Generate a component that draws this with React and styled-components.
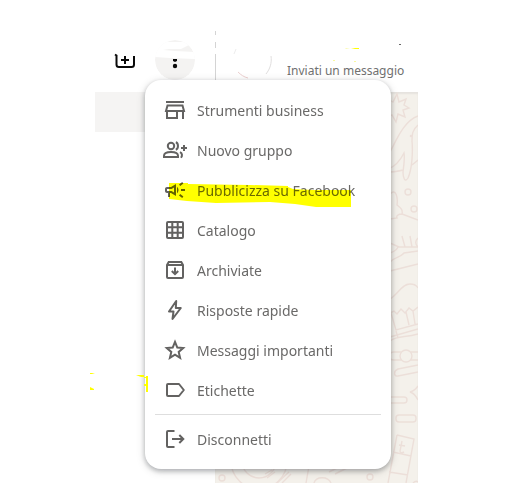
import React from 'react';
import styled, { createGlobalStyle, css } from 'styled-components';

const GlobalStyle = createGlobalStyle`
  * {
    box-sizing: border-box;
  }

  body {
    background-color: #fff;
    font-family: 'Noto Sans', 'Open Sans', sans-serif;
    margin: 0;
  }
`;

const Page = styled.div`
  display: grid;
  grid-template-columns: 120px 1fr;
  min-height: 100vh;
  overflow: hidden;
  padding: 0 109px 0 95px;
  position: relative;
`;

const Sidebar = styled.aside`
  display: flex;
  flex-direction: column;
  position: relative;
  z-index: 2;
`;

const SidebarHeader = styled.header`
  align-items: center;
  display: flex;
  height: 92px;
  justify-content: space-between;
  padding: 40px 20px 12px 18px;
`;

const IconButton = styled.button`
  background: none;
  border: 0;
  color: #0a0a0a;
  display: flex;
  padding: 0;
  ${({ $isRound }) =>
    $isRound &&
    css`
      border-radius: 50%;
      overflow: hidden;
    `}
`;

const SelectedChat = styled.div`
  background-color: #f5f4f3;
  height: 40px;
`;

const MenuAnchor = styled.div`
  position: relative;
`;

const Menu = styled.div`
  background-color: #fff;
  border-radius: 16px;
  box-shadow: 0 2px 5px rgba(11, 20, 26, 0.26), 0 2px 10px rgba(11, 20, 26, 0.16);
  left: -10px;
  padding: 10px 0;
  position: absolute;
  top: 40px;
  width: 246px;
`;

const MenuItem = styled.button`
  align-items: center;
  background: none;
  border: 0;
  color: #636261;
  display: flex;
  font-family: inherit;
  font-size: 14px;
  gap: 10px;
  height: 40px;
  line-height: 20px;
  padding: 0 18px;
  position: relative;
  text-align: left;
  white-space: nowrap;
  width: 100%;
`;

const MenuLabel = styled.span`
  color: #6a6968;
  padding-top: 2px;
`;

const MenuDivider = styled.hr`
  border: 0;
  border-top: 1px solid #dedede;
  margin: 4px 10px;
`;

const Marker = styled.svg`
  left: 24px;
  mix-blend-mode: multiply;
  position: absolute;
  top: 12px;
`;

const Chat = styled.main`
  display: flex;
  flex-direction: column;
  min-width: 0;
`;

const ChatHeader = styled.header`
  align-items: flex-end;
  display: flex;
  gap: 15px;
  height: 92px;
  padding: 0 0 12px 16px;
  position: relative;
`;

const HeaderEdge = styled.svg`
  left: 0;
  position: absolute;
  top: 30px;
`;

const ChatStatus = styled.p`
  color: #707070;
  flex: 1;
  font-size: 12px;
  line-height: 18px;
  margin: 0;
  white-space: nowrap;
`;

const Wallpaper = styled.div`
  background-color: #f4f1eb;
  box-shadow: inset 0 2px 2px rgba(11, 20, 26, 0.06);
  flex: 1;
  overflow: hidden;
`;

const Doodles = styled.svg`
  display: block;
`;

const Scraps = styled.svg`
  left: 0;
  pointer-events: none;
  position: absolute;
  top: 0;
  z-index: 3;
`;

const Icon = ({ children }) => (
  <svg
    width="24"
    height="24"
    viewBox="0 0 24 24"
    fill="none"
    stroke="currentColor"
    strokeWidth="2"
    aria-hidden="true"
  >
    {children}
  </svg>
);

const icons = {
  store: <path d="M3 4h18M4.5 7.5h15L21 13H3zM4 13v7h10v-7M20 13v8" />,
  group: (
    <g strokeWidth="2">
      <circle cx="8" cy="8" r="3.2" />
      <path d="M1 19v-1.2C1 15 5 14 8 14s7 1 7 3.8V19zM12.8 4.3c2.9.8 2.9 6.6 0 7.4M17 14.2c2.4 1.2 2.5 3.4 1 5.6" />
      <path d="M21 7v6M18 10h6" />
    </g>
  ),
  campaign: (
    <path
      fill="currentColor"
      stroke="none"
      d="M18 11v2h4v-2h-4zM16 17.6l3.2 2.4 1.2-1.6-3.2-2.4-1.2 1.6zM20.4 5.6 19.2 4 16 6.4 17.2 8l3.2-2.4zM4 9c-1.1 0-2 .9-2 2v2c0 1.1.9 2 2 2h1v4h2v-4h1l5 3V6L8 9H4zm5 1.7 2-1.2v5l-2-1.2-.5-.3H4v-2h4.5l.5-.3zM15.5 12c0-1.3-.6-2.5-1.5-3.3v6.6c.9-.8 1.5-2 1.5-3.3z"
    />
  ),
  grid: (
    <>
      <rect x="4" y="4" width="16" height="16" rx="1" />
      <path d="M9.3 4v16M14.7 4v16M4 9.3h16M4 14.7h16" />
    </>
  ),
  archive: (
    <>
      <path d="M4 7l1.7-3h12.6L20 7v12a1 1 0 0 1-1 1H5a1 1 0 0 1-1-1zM4 7h16" />
      <path d="M12 9.5v6.3M8.8 13l3.2 3.2 3.2-3.2" />
    </>
  ),
  bolt: <path strokeLinejoin="round" d="M13.2 3 6 13.5h4.5L9.5 21l8.3-11h-5z" />,
  star: (
    <path
      d="M12 3.800l2.300 5.700 5.900.500-4.500 3.900 1.400 6L12 16.700l-5.100 3.200 1.400-6-4.500-3.900 5.900-.500z"
    />
  ),
  label: <path strokeLinejoin="round" d="M5 6h11l4.800 6-4.800 6H5a1 1 0 0 1-1-1V7a1 1 0 0 1 1-1z" />,
  logout: <path d="M11.500 4H5a1 1 0 0 0-1 1v14a1 1 0 0 0 1 1h6.500M9 12h11M16.300 8l4 4-4 4" />,
};

const menuItems = [
  { icon: 'store', label: 'Strumenti business' },
  { icon: 'group', label: 'Nuovo gruppo' },
  { icon: 'campaign', label: 'Pubblicizza su Facebook', isMarked: true },
  { icon: 'grid', label: 'Catalogo' },
  { icon: 'archive', label: 'Archiviate' },
  { icon: 'bolt', label: 'Risposte rapide' },
  { icon: 'star', label: 'Messaggi importanti' },
  { icon: 'label', label: 'Etichette' },
];

const MainMenu = () => (
  <Menu role="menu">
    {menuItems.map(({ icon, label, isMarked }) => (
      <MenuItem key={label} type="button" role="menuitem">
        <Icon>{icons[icon]}</Icon>
        <MenuLabel>{label}</MenuLabel>
        {isMarked && (
          <Marker width="183" height="26" viewBox="0 0 183 26" aria-hidden="true">
            <path
              fill="#ff0"
              d="M0 1h19v1l30 0.500 32 0.500 38 1v1l5 2 20 1h38v17h-35l-21-3-25-2-54 1-29-2-18-2z"
            />
          </Marker>
        )}
      </MenuItem>
    ))}
    <MenuDivider />
    <MenuItem type="button" role="menuitem">
      <Icon>{icons.logout}</Icon>
      <MenuLabel>Disconnetti</MenuLabel>
    </MenuItem>
  </Menu>
);

const WallpaperDoodles = () => (
  <Doodles
    width="203"
    height="391"
    viewBox="215 92 203 391"
    fill="none"
    stroke="#ecdfd9"
    strokeWidth="1.4"
    aria-hidden="true"
  >
    <path d="M388 99l5 3 4-8 2 8 7-3-2 6 5 3-6 2 2 7-7-3-2 8-4-7-5 2" />
    <path d="M390 152c7-13 14-31 28-36M418 125c-6 5-6 10-6 16 1 12 0 28-4 37-3 5-5 0-5-6 1-8 2-14 1-19-4 8-10 14-16 16M390 172c5 0 9-1 13-2M412 165l6-5" />
    <circle cx="408" cy="192" r="3" />
    <circle cx="414" cy="209" r="3" />
    <circle cx="411" cy="136" r=".6" />
    <path d="M390 194c6-6 8 3 7 11 4 3 6 5 5 9l16 6M402 214c-4 0-6 2-5 4l-7 1M390 243l9 4h19M390 253c6-2 8-5 8-7M402 236l3 11M410 236l2 11M418 238c-3 3-3 6 0 9M390 262c6-6 10-4 14-9l14-2M390 271l28-7" />
    <path d="M390 299c8-5 12-15 20-15 4 0 7 2 8 4M390 313l4-2 3 3 4-5 4 4 4-5 4 3 5-4M391 313l5 17 22-6M406 312l3 13M413 311l2 13M390 337l28-8M390 341c8-6 15-3 28-7M396 331l2 7" />
    <circle cx="406" cy="356" r="6" />
    <path d="M401 352h-7c-6 0-6 8 0 8h7M411 352h7M411 360h7M418 365l-20 4c-5 2-4 8 0 7l20-4M418 386c-2 3-4 5-8 6 4 1 6 4 8 8" />
    <rect x="382" y="397" width="25" height="6" rx="3" />
    <rect x="396" y="415" width="20" height="7" rx="3" />
    <path d="M397 435l17 4-8 44M397 435l-9 48M393 452l18 4M389 472l19 3M402 441l-2 10c0 2 2 2 4 1M399 445l6 1" />
    <circle cx="222" cy="478" r="3" />
    <circle cx="259" cy="461" r="28" />
    <circle cx="259" cy="461" r="17" />
    <path d="M265 474l7-4M267 478l8-6M277 483l12-11M282 483l9-9M309 466l-3 17M314 483c2-7 14-7 17 0M329 472l20-10M335 474l18-9M413 483c2-2 4-2 5-1" />
    <circle cx="370" cy="477" r="3" />
  </Doodles>
);

const App = () => (
  <>
    <GlobalStyle />
    <Page>
      <Sidebar>
        <SidebarHeader>
          <IconButton type="button" aria-label="Nuova chat">
            <Icon>
              <path d="M2 6.500l1.500 1v9q0 2.500 2.500 2.500h12.500q2.500 0 2.500-2.500V8M12 8v8M8 12h8" />
            </Icon>
          </IconButton>
          <MenuAnchor>
            <IconButton type="button" aria-label="Menu" aria-haspopup="menu" $isRound>
              <svg width="40" height="40" viewBox="0 0 40 40" aria-hidden="true">
                <circle cx="20" cy="20" r="20" fill="#f4f3f2" />
                <path fill="#fff" d="M0 0h10l5 1-5 1 12 0 11 0 1 3-8 4-12 0-6 1 12 1 20 1v7l-25-1-15-1z" />
                <circle cx="20" cy="26" r="2.200" fill="#0a0a0a" />
                <path fill="#0a0a0a" d="M18 19h4v1.500l-1 1.300h-2l-1-1.300z" />
              </svg>
            </IconButton>
            <MainMenu />
          </MenuAnchor>
        </SidebarHeader>
        <SelectedChat />
      </Sidebar>
      <Chat>
        <ChatHeader>
          <HeaderEdge width="2" height="50" aria-hidden="true">
            <path stroke="#d4d4d4" d="M.5 1v4M.5 12v6M.5 24v26" />
          </HeaderEdge>
          <svg width="41" height="40" viewBox="0 0 41 40" fill="none" aria-hidden="true">
            <path stroke="#e0dede" d="M40 16c1 7-1 13-5 18" />
            <path stroke="#eccfcf" d="M7 32c3 3 6 5 10 6" />
            <path stroke="#ededed" d="M5 9l-2 5" />
          </svg>
          <ChatStatus>Inviati un messaggio</ChatStatus>
        </ChatHeader>
        <Wallpaper>
          <WallpaperDoodles />
        </Wallpaper>
      </Chat>
      <Scraps width="418" height="400" viewBox="0 0 418 400" aria-hidden="true">
        <path
          fill="#ff0"
          d="M351 49l4-1h4v1zM90 373h5l-3 1h-2zM90 387l4 2v1h-4zM136 375h8v2h-3zM146 376h2v16h-2zM144 377h2v1h-2zM144 384h2v2h-2z"
        />
        <path fill="#f9f9a0" d="M345 48l5 1h-4zM333 60h2v1h-2zM354 61h2v1h-2z" />
        <path fill="#666" d="M399 44h2v1h-2z" />
      </Scraps>
    </Page>
  </>
);

export default App;
